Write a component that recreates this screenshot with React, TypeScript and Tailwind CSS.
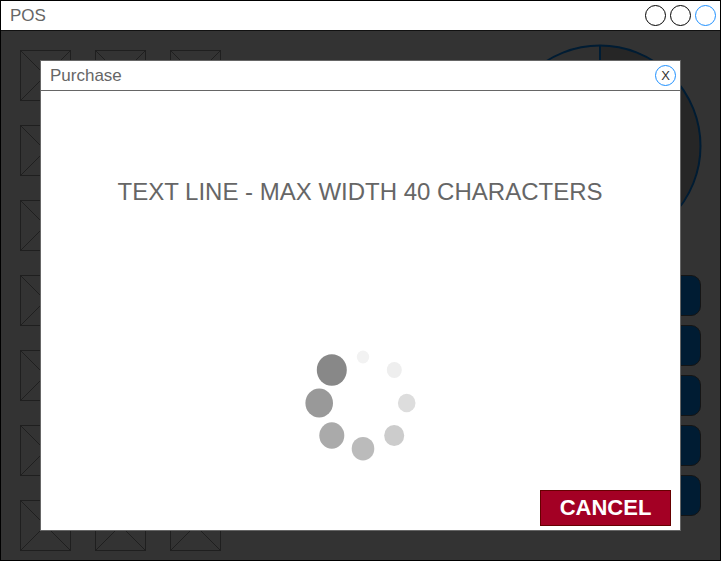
const tiles = Array.from({ length: 21 }, (_, i) => i);
const actions = [0, 1, 2, 3, 4];

const dots = [
  { cx: 73, cy: 27, rx: 6.2, ry: 6.5, fill: "#f2f2f2" },
  { cx: 104.3, cy: 40, rx: 7.5, ry: 8, fill: "#eeeeee" },
  { cx: 116.7, cy: 73, rx: 8.8, ry: 9.2, fill: "#dddddd" },
  { cx: 104.2, cy: 105.5, rx: 10, ry: 10.6, fill: "#cccccc" },
  { cx: 73, cy: 118.7, rx: 11.3, ry: 11.8, fill: "#bbbbbb" },
  { cx: 41.8, cy: 105.5, rx: 12.5, ry: 13.2, fill: "#aaaaaa" },
  { cx: 29.2, cy: 73, rx: 13.8, ry: 14.5, fill: "#999999" },
  { cx: 41.8, cy: 40, rx: 15, ry: 15.8, fill: "#888888" },
];

function Tile() {
  return (
    <svg className="block size-[51px]" viewBox="0 0 51 51" fill="none" stroke="#1f1f1f">
      <rect x="0.5" y="0.5" width="50" height="50" />
      <path d="M0.5 0.5L50.5 50.5M50.5 0.5L0.5 50.5" />
    </svg>
  );
}

function Spinner() {
  return (
    <svg className="block h-[140px] w-[146px]" viewBox="0 0 146 140">
      {dots.map((d) => (
        <ellipse key={d.fill} {...d} />
      ))}
    </svg>
  );
}

function Pie() {
  return (
    <svg className="block size-[204px]" viewBox="0 0 204 204" fill="none">
      <circle cx="102" cy="102" r="100.5" fill="#303030" />
      <path d="M102 102V1.5A100.5 100.5 0 0 1 102 202.5Z" fill="#262626" />
      <path d="M102 102V1.5" stroke="#001c33" strokeWidth="2" />
      <circle cx="102" cy="102" r="100.5" stroke="#001c33" strokeWidth="2" />
    </svg>
  );
}

export default function App() {
  return (
    <div className="relative flex h-[561px] w-[721px] flex-col overflow-hidden border border-black bg-[#333333] font-['Liberation_Sans',Arial,sans-serif] text-[#666666]">
      <header className="flex h-[30px] shrink-0 items-center justify-between border-b border-[#111111] bg-white pr-1 pl-[9px]">
        <h1 className="text-[17px] leading-5">POS</h1>
        <div className="flex gap-1">
          <span className="size-[21px] rounded-full border border-black" />
          <span className="size-[21px] rounded-full border border-black" />
          <span className="size-[21px] rounded-full border border-[#1e90ff]" />
        </div>
      </header>

      <main className="flex flex-1 justify-between pt-[19px] pl-[19px]">
        <div className="grid h-max grid-cols-[repeat(3,51px)] gap-6">
          {tiles.map((i) => (
            <Tile key={i} />
          ))}
        </div>
        <div className="-mt-[6px] mr-[18px] flex flex-col items-end">
          <Pie />
          <div className="mt-[27px] mr-[1px] flex flex-col gap-[9px]">
            {actions.map((i) => (
              <div key={i} className="h-[41px] w-[201px] rounded-[10px] border border-[#151515] bg-[#001c33]" />
            ))}
          </div>
        </div>
      </main>

      <section
        role="dialog"
        className="absolute top-[59px] left-[39px] flex h-[471px] w-[641px] flex-col border border-[#666666] bg-white"
      >
        <div className="flex h-[30px] shrink-0 items-center justify-between border-b border-[#666666] pr-1 pl-[9px]">
          <h2 className="text-[17px] leading-5">Purchase</h2>
          <button className="flex size-[21px] items-center justify-center rounded-full border border-[#1e90ff] text-[13px] leading-none text-[#333333]">
            X
          </button>
        </div>
        <p className="mt-[86px] -ml-px text-center text-[24px] leading-[30px] whitespace-nowrap">
          TEXT LINE - MAX WIDTH 40 CHARACTERS
        </p>
        <div className="mt-[123px] pl-[249px]">
          <Spinner />
        </div>
        <button className="mt-auto mr-[9px] mb-1 h-9 w-[131px] self-end border border-[#660000] bg-[#a30024] text-[22px] leading-none font-bold text-white">
          CANCEL
        </button>
      </section>
    </div>
  );
}
